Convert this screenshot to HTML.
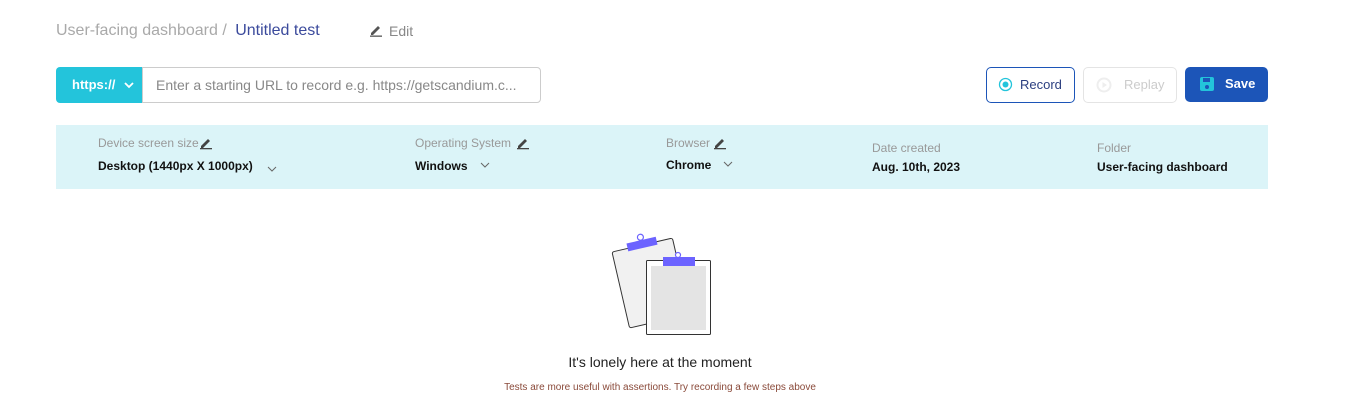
<!DOCTYPE html>
<html><head><meta charset="utf-8"><style>
*{box-sizing:border-box;margin:0;padding:0}
body{width:1366px;height:414px;background:#fff;font-family:"Liberation Sans",sans-serif;position:relative;overflow:hidden}
.a{position:absolute;white-space:nowrap}
</style></head><body>
<div class="a" style="left:56px;top:22px;font-size:16px;color:#a9a9a9">User-facing dashboard / <span style="color:#3b4a9c;margin-left:4px">Untitled test</span></div>
<svg class="a" style="left:369px;top:23px" width="14" height="14" viewBox="0 0 14 14"><path d="M2 10 L9 3 L11 5 L4 12 L2 12Z" fill="#555"/><rect x="1" y="12.5" width="12" height="1.3" fill="#555"/></svg>
<div class="a" style="left:389px;top:23px;font-size:14px;color:#888">Edit</div>

<div class="a" style="left:56px;top:67px;width:87px;height:36px;background:#23c4db;border-radius:4px 0 0 4px;color:#fff;font-size:13px;font-weight:bold;padding:10px 0 0 16px">https:// <svg width="12" height="8" style="margin-left:4px" viewBox="0 0 12 8"><path d="M2 2 L6 6 L10 2" stroke="#fff" stroke-width="1.8" fill="none"/></svg></div>
<div class="a" style="left:142px;top:67px;width:399px;height:36px;border:1px solid #ccc;border-radius:0 4px 4px 0;font-size:14px;color:#888;padding:9px 0 0 13px">Enter a starting URL to record e.g. https://getscandium.c...</div>

<div class="a" style="left:986px;top:67px;width:89px;height:36px;border:1px solid #1c55b8;border-radius:5px;font-size:13px;color:#2b3f80;padding:9px 0 0 33px">Record</div>
<svg class="a" style="left:998px;top:77px" width="15" height="15"><circle cx="7.5" cy="7.5" r="6" stroke="#23c4db" stroke-width="1.3" fill="none"/><circle cx="7.5" cy="7.5" r="3" fill="#23c4db"/></svg>
<div class="a" style="left:1083px;top:67px;width:94px;height:36px;border:1px solid #e4e4e4;border-radius:5px;font-size:13px;color:#ccc;padding:9px 0 0 40px">Replay</div>
<svg class="a" style="left:1096px;top:77px" width="16" height="16"><circle cx="8" cy="8" r="6.5" stroke="#eee" stroke-width="2" fill="none"/><path d="M6.5 5 L11 8 L6.5 11Z" fill="#eee"/></svg>
<div class="a" style="left:1185px;top:67px;width:83px;height:35px;background:#1c55b8;border-radius:5px;font-size:13px;font-weight:bold;color:#fff;padding:9px 0 0 40px">Save</div>
<svg class="a" style="left:1199px;top:76px" width="16" height="16"><rect x="1" y="1" width="14" height="14" rx="2" fill="#23c4db"/><rect x="4" y="2" width="7" height="4" fill="#1c55b8"/><circle cx="8" cy="11" r="2" fill="#1c55b8"/></svg>

<div class="a" style="left:56px;top:125px;width:1212px;height:64px;background:#dbf4f8"></div>
<div class="a" style="left:98px;top:136px;font-size:12px;color:#999">Device screen size</div>
<div class="a" style="left:98px;top:159px;font-size:12px;font-weight:bold;color:#111">Desktop (1440px X 1000px)</div>
<div class="a" style="left:415px;top:136px;font-size:12px;color:#999">Operating System</div>
<div class="a" style="left:415px;top:159px;font-size:12px;font-weight:bold;color:#111">Windows</div>
<div class="a" style="left:666px;top:136px;font-size:12px;color:#999">Browser</div>
<div class="a" style="left:666px;top:158px;font-size:12px;font-weight:bold;color:#111">Chrome</div>
<div class="a" style="left:872px;top:141px;font-size:12px;color:#999">Date created</div>
<div class="a" style="left:872px;top:160px;font-size:12px;font-weight:bold;color:#111">Aug. 10th, 2023</div>
<div class="a" style="left:1097px;top:141px;font-size:12px;color:#999">Folder</div>
<div class="a" style="left:1097px;top:160px;font-size:12px;font-weight:bold;color:#111">User-facing dashboard</div>
<svg class="a" style="left:0;top:0" width="1366" height="200">
<g fill="#444"><path d="M201 146l7-7 2 2-7 7h-2z"/><rect x="200" y="148" width="12" height="1.3"/>
<path d="M518 146l7-7 2 2-7 7h-2z"/><rect x="517" y="148" width="12" height="1.3"/>
<path d="M715 146l7-7 2 2-7 7h-2z"/><rect x="714" y="148" width="12" height="1.3"/></g>
<g stroke="#666" fill="none" stroke-width="1"><path d="M268 167l4 4 4-4"/><path d="M481 163l4 4 4-4"/><path d="M724 162l4 4 4-4"/></g>
</svg>

<svg class="a" style="left:600px;top:230px" width="120" height="110">
<g transform="rotate(-13 12 22)"><rect x="12" y="22" width="62" height="78" rx="2" fill="#f1f1f1" stroke="#333" stroke-width="1"/>
<rect x="28" y="17" width="30" height="8" fill="#6c63ff"/><circle cx="43" cy="14" r="3" fill="#fff" stroke="#6c63ff" stroke-width="1.2"/></g>
<rect x="46.5" y="30.5" width="64" height="74" rx="1" fill="#fff" stroke="#333" stroke-width="1"/>
<rect x="51" y="36" width="55" height="64" fill="#e4e4e4"/>
<rect x="63" y="27" width="32" height="9" fill="#6c63ff"/><circle cx="78" cy="25" r="2.5" fill="#fff" stroke="#6c63ff" stroke-width="1.2"/>
</svg>
<div class="a" style="left:0;width:1320px;text-align:center;top:354px;font-size:14px;color:#222">It's lonely here at the moment</div>
<div class="a" style="left:0;width:1320px;text-align:center;top:382px;font-size:10px;color:#8a4a3a">Tests are more useful with assertions. Try recording a few steps above</div>
</body></html>
